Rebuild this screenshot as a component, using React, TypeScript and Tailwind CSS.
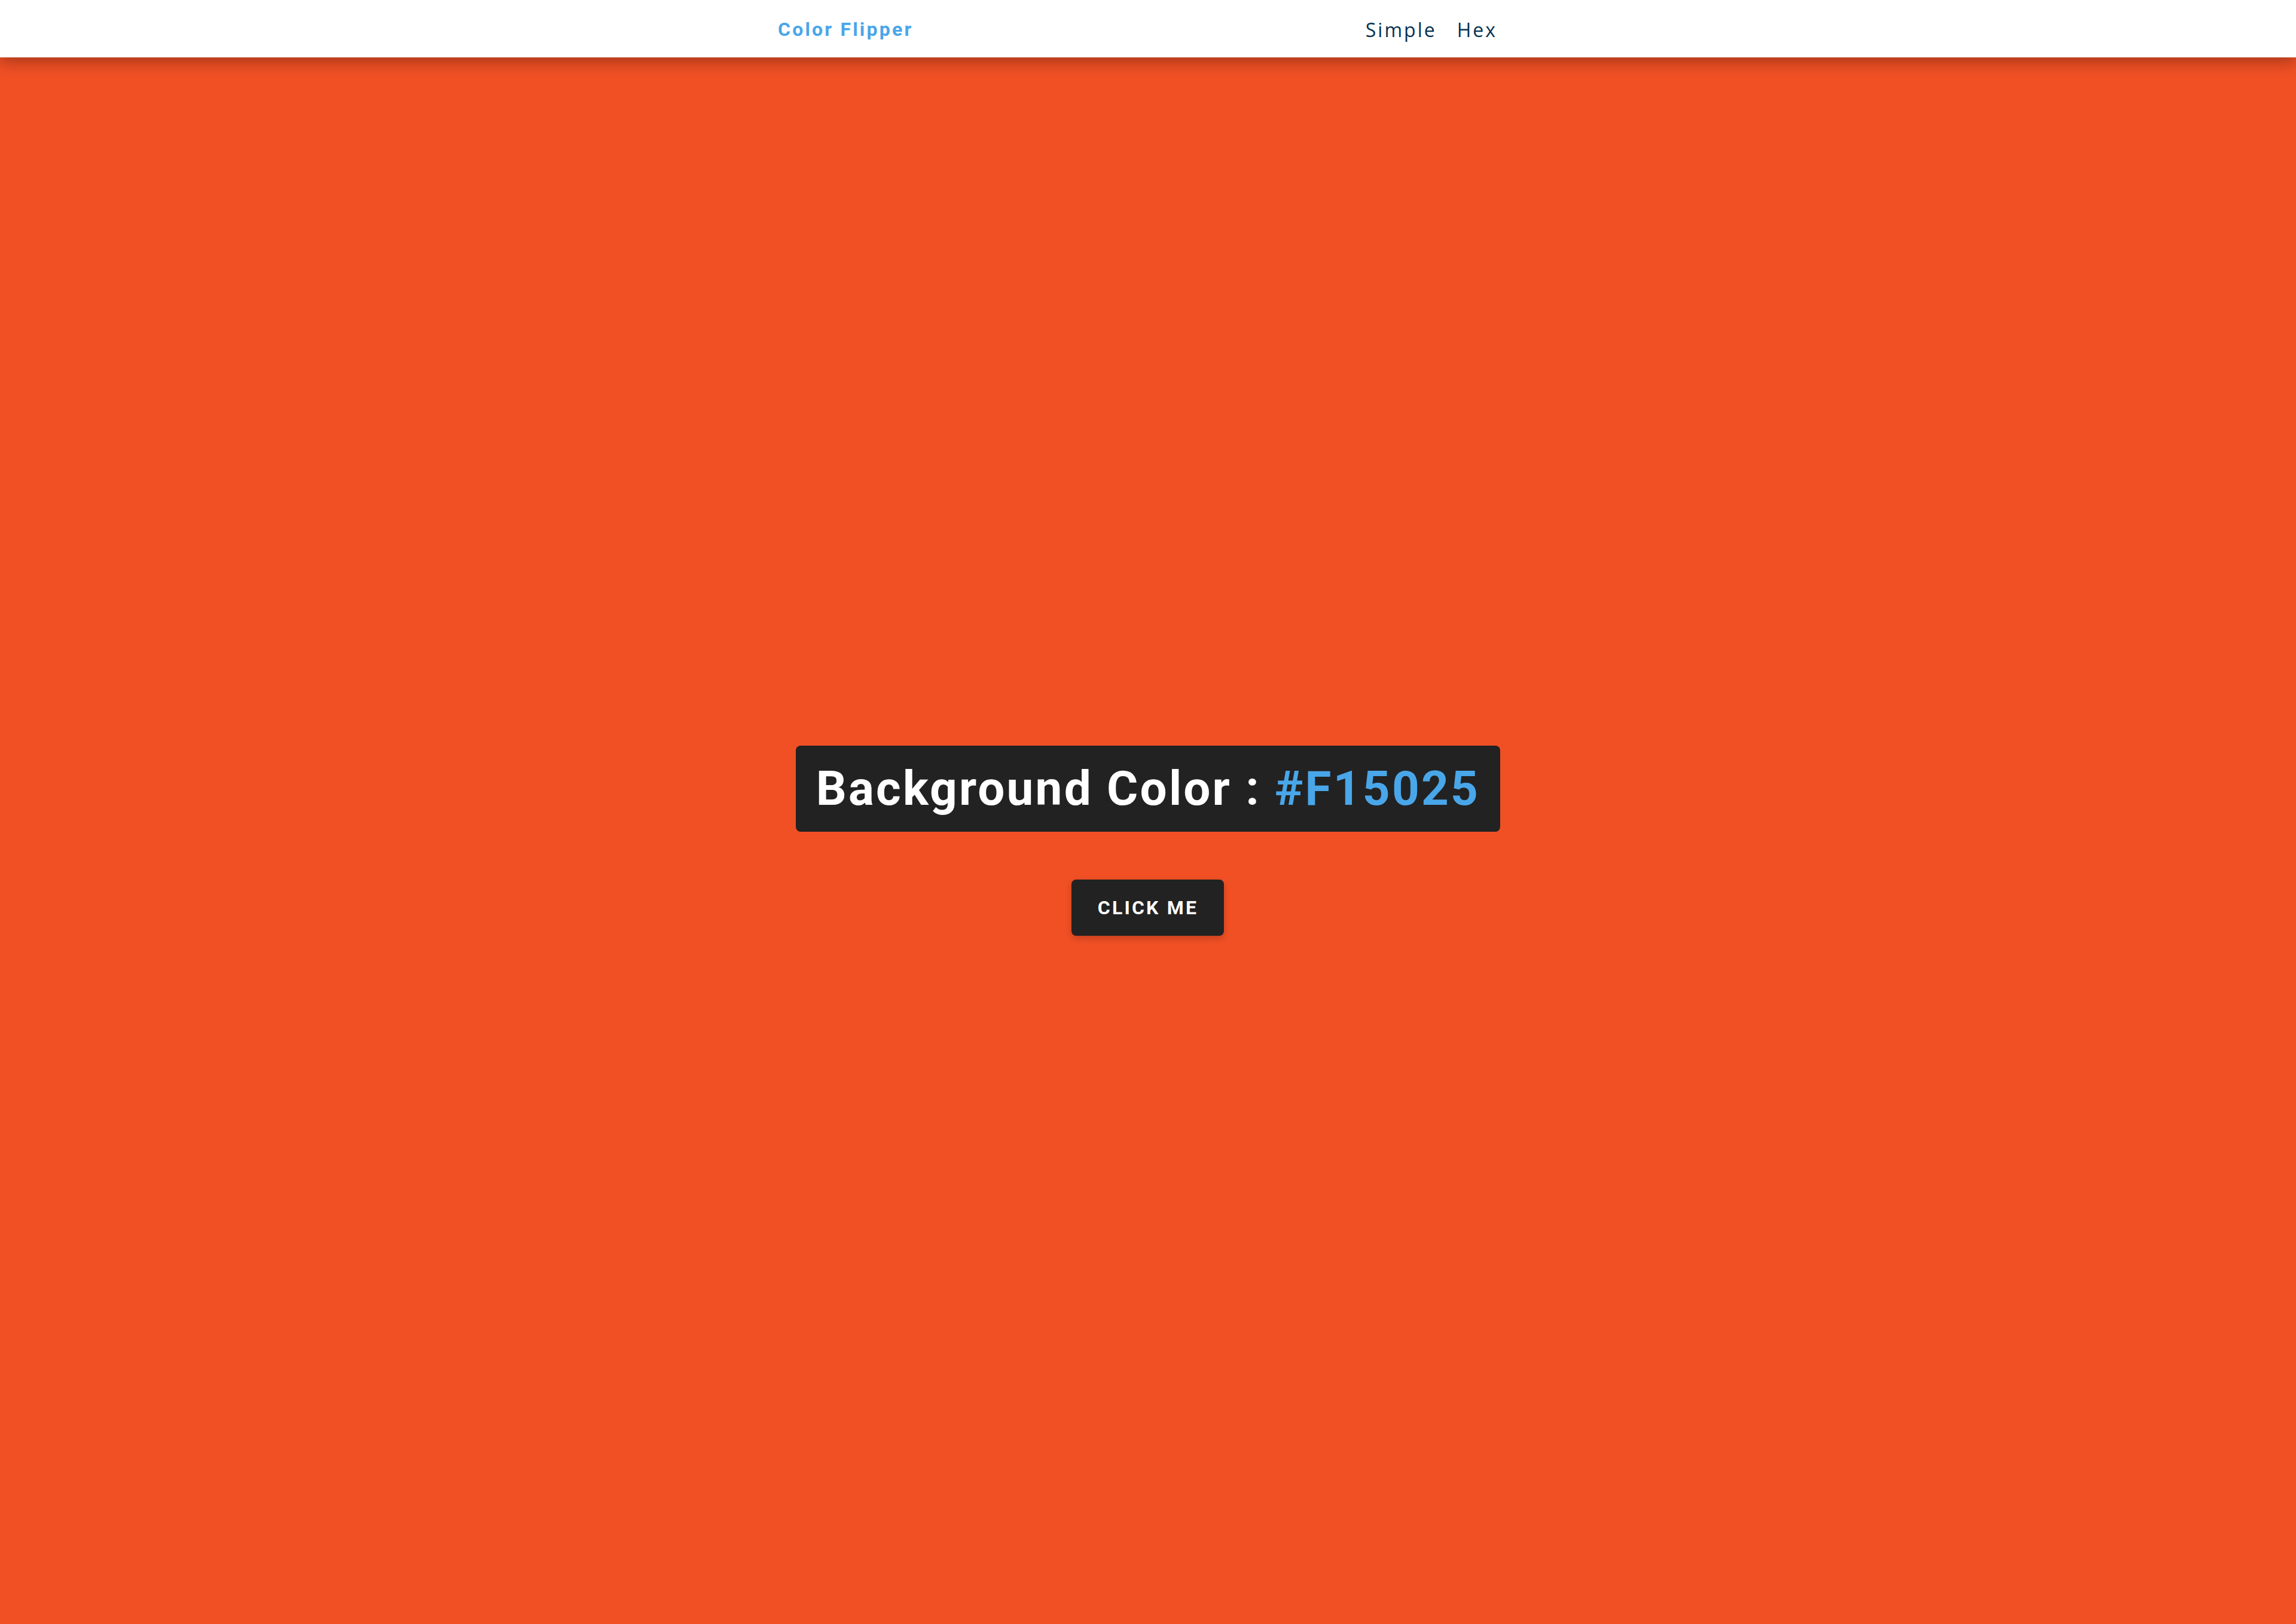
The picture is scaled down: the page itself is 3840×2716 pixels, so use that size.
export default function App() {
    return (
        <div className="min-h-screen flex flex-col bg-[#F15025]">
            {/* Nav */}
            <nav className="relative z-10 h-[96px] bg-white shadow-[0_8px_24px_rgba(0,0,0,0.3)]">
                <div className="mx-auto w-[1238px] pr-[35px] h-full flex justify-between items-center">
                    <h4 className="font-['Roboto',sans-serif] font-bold text-[32px] leading-none tracking-[3.2px] text-[#49A6E9] pt-[2px]">
                        Color Flipper
                    </h4>
                    <ul className="flex gap-[34px] font-['Open_Sans',sans-serif] text-[32px] leading-none tracking-[3px] text-[#063251] pt-[4px]">
                        <li>
                            <a href="#">Simple</a>
                        </li>
                        <li>
                            <a href="#">Hex</a>
                        </li>
                    </ul>
                </div>
            </nav>

            {/* Main */}
            <main className="flex-1 min-h-[2620px] grid place-items-center">
                <div className="text-center flex flex-col items-center">
                    <h2 className="bg-[#222222] text-white font-['Roboto',sans-serif] font-bold text-[80px] leading-[100px] tracking-[3.2px] px-[34px] py-[22px] rounded-[8px] mb-[80px]">
                        Background Color :{" "}
                        <span className="text-[#49A6E9]">#F15025</span>
                    </h2>
                    <button className="bg-[#222222] text-white font-['Roboto',sans-serif] font-bold text-[32px] leading-none tracking-[3.2px] uppercase h-[94px] w-[255px] rounded-[8px] shadow-[0_4px_12px_rgba(0,0,0,0.2)]">
                        click me
                    </button>
                </div>
            </main>
        </div>
    );
}
